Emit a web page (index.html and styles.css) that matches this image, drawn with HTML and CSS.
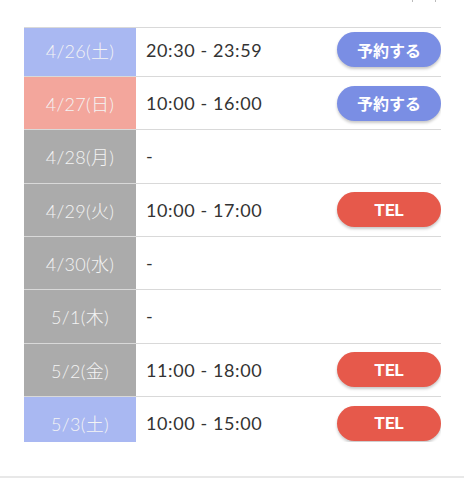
FILE: index.html
```html
<!DOCTYPE html>
<html lang="ja">
<head>
<meta charset="utf-8">
<link rel="stylesheet" href="styles.css">
</head>
<body>
<div class="top">
  <span class="tick"></span><span class="tick"></span>
</div>
<div class="schedule">
  <div class="list">
    <div class="row"><div class="date sat">4/26(土)</div><div class="info"><span class="time">20:30 - 23:59</span><a class="btn reserve">予約する</a></div></div>
    <div class="row"><div class="date sun">4/27(日)</div><div class="info"><span class="time">10:00 - 16:00</span><a class="btn reserve">予約する</a></div></div>
    <div class="row"><div class="date wk">4/28(月)</div><div class="info"><span class="time">-</span></div></div>
    <div class="row"><div class="date wk">4/29(火)</div><div class="info"><span class="time">10:00 - 17:00</span><a class="btn tel">TEL</a></div></div>
    <div class="row"><div class="date wk">4/30(水)</div><div class="info"><span class="time">-</span></div></div>
    <div class="row"><div class="date wk">5/1(木)</div><div class="info"><span class="time">-</span></div></div>
    <div class="row"><div class="date wk">5/2(金)</div><div class="info"><span class="time">11:00 - 18:00</span><a class="btn tel">TEL</a></div></div>
    <div class="row"><div class="date sat">5/3(土)</div><div class="info"><span class="time">10:00 - 15:00</span><a class="btn tel">TEL</a></div></div>
  </div>
</div>
<div class="footer"></div>
</body>
</html>
```
FILE: styles.css
```css
html, body {
  margin: 0;
  padding: 0;
  background: #fff;
  font-family: "Noto Sans CJK JP", "Noto Sans", sans-serif;
}
.top {
  height: 27px;
  display: flex;
  justify-content: flex-end;
  align-items: flex-start;
  gap: 22px;
  padding-right: 28px;
  box-sizing: border-box;
}
.tick {
  width: 1px;
  height: 2px;
  background: #bbb;
}
.schedule {
  margin-left: 24px;
  width: 417px;
  height: 415px;
  overflow: hidden;
  border-top: 1px solid #d9d9d9;
  box-sizing: border-box;
}
.list {
  margin-top: -4.33px;
}
.row {
  display: flex;
  height: 53.33px;
  border-bottom: 1px solid #d9d9d9;
  box-sizing: border-box;
}
.date {
  width: 112px;
  flex: none;
  display: flex;
  align-items: center;
  justify-content: center;
  color: #f4f4f4;
  font-family: "Lato", "Noto Sans CJK JP", sans-serif;
  font-weight: 300;
  font-size: 18px;
  letter-spacing: 0.3px;
}
.date.sat { background: #a9b8f2; }
.date.sun { background: #f3a69c; }
.date.wk { background: #ababab; }
.info {
  flex: 1;
  display: flex;
  align-items: center;
  justify-content: space-between;
  padding-left: 10px;
}
.time {
  font-family: "Lato", "Noto Sans", sans-serif;
  font-size: 18px;
  color: #333;
  letter-spacing: 0.6px;
}
.btn {
  width: 104px;
  height: 35px;
  border-radius: 18px;
  display: flex;
  align-items: center;
  justify-content: center;
  color: #fff;
  font-size: 16px;
  font-weight: 700;
  box-shadow: 0 2px 3px rgba(0, 0, 0, 0.22);
}
.btn.reserve { background: #7a8ee4; }
.btn.tel { background: #e6594b; font-family: "Roboto", "Noto Sans", sans-serif; font-size: 17px; }
.footer {
  margin-top: 34px;
  border-top: 2px solid #e8e8e8;
}
```
